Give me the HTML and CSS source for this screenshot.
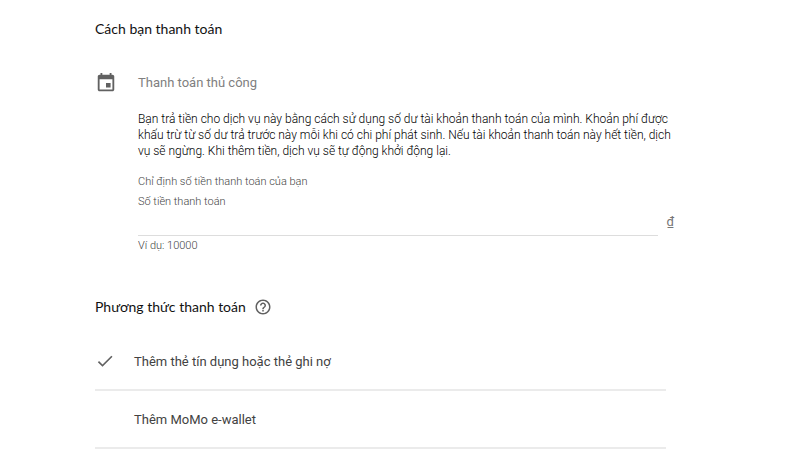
FILE: index.html
```html
<!DOCTYPE html>
<html lang="vi">
<head>
  <meta charset="UTF-8">
  <meta name="viewport" content="width=device-width, initial-scale=1">
  <title>Thanh toán</title>
  <link rel="stylesheet" href="styles.css">
</head>
<body>
  <form class="container">
    <h2>Cách bạn thanh toán</h2>

    <section class="manual">
      <svg class="icon" viewBox="0 0 24 24"><path d="M17 12h-5v5h5v-5zM16 1v2H8V1H6v2H5c-1.11 0-1.99.9-1.99 2L3 19c0 1.1.89 2 2 2h14c1.1 0 2-.9 2-2V5c0-1.1-.9-2-2-2h-1V1h-2zm3 18H5V8h14v11z"/></svg>
      <div class="manual-body">
        <h3>Thanh toán thủ công</h3>
        <p class="description">Bạn trả tiền cho dịch vụ này bằng cách sử dụng số dư tài khoản thanh toán của mình. Khoản phí được khấu trừ từ số dư trả trước này mỗi khi có chi phí phát sinh. Nếu tài khoản thanh toán này hết tiền, dịch vụ sẽ ngừng. Khi thêm tiền, dịch vụ sẽ tự động khởi động lại.</p>
        <p class="hint">Chỉ định số tiền thanh toán của bạn</p>
        <label class="hint" for="amount">Số tiền thanh toán</label>
        <div class="amount-row">
          <input type="text" id="amount" name="amount">
          <span class="currency">₫</span>
        </div>
        <p class="hint">Ví dụ: 10000</p>
      </div>
    </section>

    <div class="methods-title">
      <h2>Phương thức thanh toán</h2>
      <button type="button" class="help" aria-label="Trợ giúp">
        <svg viewBox="0 0 24 24"><path d="M11 18h2v-2h-2v2zm1-16C6.48 2 2 6.48 2 12s4.48 10 10 10 10-4.48 10-10S17.52 2 12 2zm0 18c-4.41 0-8-3.59-8-8s3.59-8 8-8 8 3.59 8 8-3.59 8-8 8zm0-14c-2.21 0-4 1.79-4 4h2c0-1.1.9-2 2-2s2 .9 2 2c0 2-3 1.75-3 5h2c0-2.25 3-2.5 3-5 0-2.21-1.79-4-4-4z"/></svg>
      </button>
    </div>

    <div class="methods">
      <button type="button" class="method">
        <svg class="check" viewBox="0 0 24 24"><path d="M9 16.17L4.83 12l-1.42 1.41L9 19 21 7l-1.41-1.41z"/></svg>
        <span>Thêm thẻ tín dụng hoặc thẻ ghi nợ</span>
      </button>
      <button type="button" class="method">
        <span class="check"></span>
        <span>Thêm MoMo e-wallet</span>
      </button>
    </div>
  </form>
</body>
</html>
```
FILE: styles.css
```css
* {
  box-sizing: border-box;
}

body {
  font-family: Roboto, sans-serif;
  background-color: #fff;
  color: #424242;
  margin: 0;
}

.container {
  padding: 19px 134px 16px 95px;
}

h2,
h3,
p {
  margin: 0;
}

h2 {
  font-family: Lato, sans-serif;
  font-size: 14px;
  line-height: 20px;
  font-weight: 400;
  color: #111;
}

h3 {
  font-size: 13px;
  line-height: 22px;
  font-weight: 400;
  color: #808080;
}

svg {
  display: block;
  fill: #616161;
}

.manual {
  display: flex;
  gap: 21px;
  margin-top: 33px;
}

.icon {
  width: 22px;
  height: 22px;
  flex: none;
}

.manual-body {
  flex: 1;
}

.description {
  font-size: 12px;
  line-height: 16px;
  font-weight: 300;
  color: #000;
  margin: 17px -12px 13px 0;
}

.hint {
  display: block;
  font-size: 11px;
  line-height: 20px;
  font-weight: 300;
  color: #444;
}

.amount-row {
  display: flex;
  gap: 8px;
  margin-right: -8px;
}

input {
  flex: 1;
  min-width: 0;
  height: 24px;
  padding: 0;
  border: none;
  border-bottom: 1px solid #ddd;
  font: inherit;
  font-size: 13px;
  outline: none;
}

.currency {
  font-size: 13px;
  line-height: 20px;
  color: #757575;
}

.methods-title {
  display: flex;
  align-items: center;
  gap: 8px;
  margin-top: 41px;
}

button {
  font: inherit;
  color: inherit;
  background: none;
  border: none;
  padding: 0;
  cursor: pointer;
}

.help svg {
  width: 18px;
  height: 18px;
}

.methods {
  margin-top: 16px;
}

.method {
  display: flex;
  align-items: center;
  gap: 19px;
  width: 100%;
  height: 58px;
  border-bottom: 2px solid #ebebeb;
  font-size: 13px;
  text-align: left;
}

.check {
  width: 20px;
  height: 20px;
}
```
